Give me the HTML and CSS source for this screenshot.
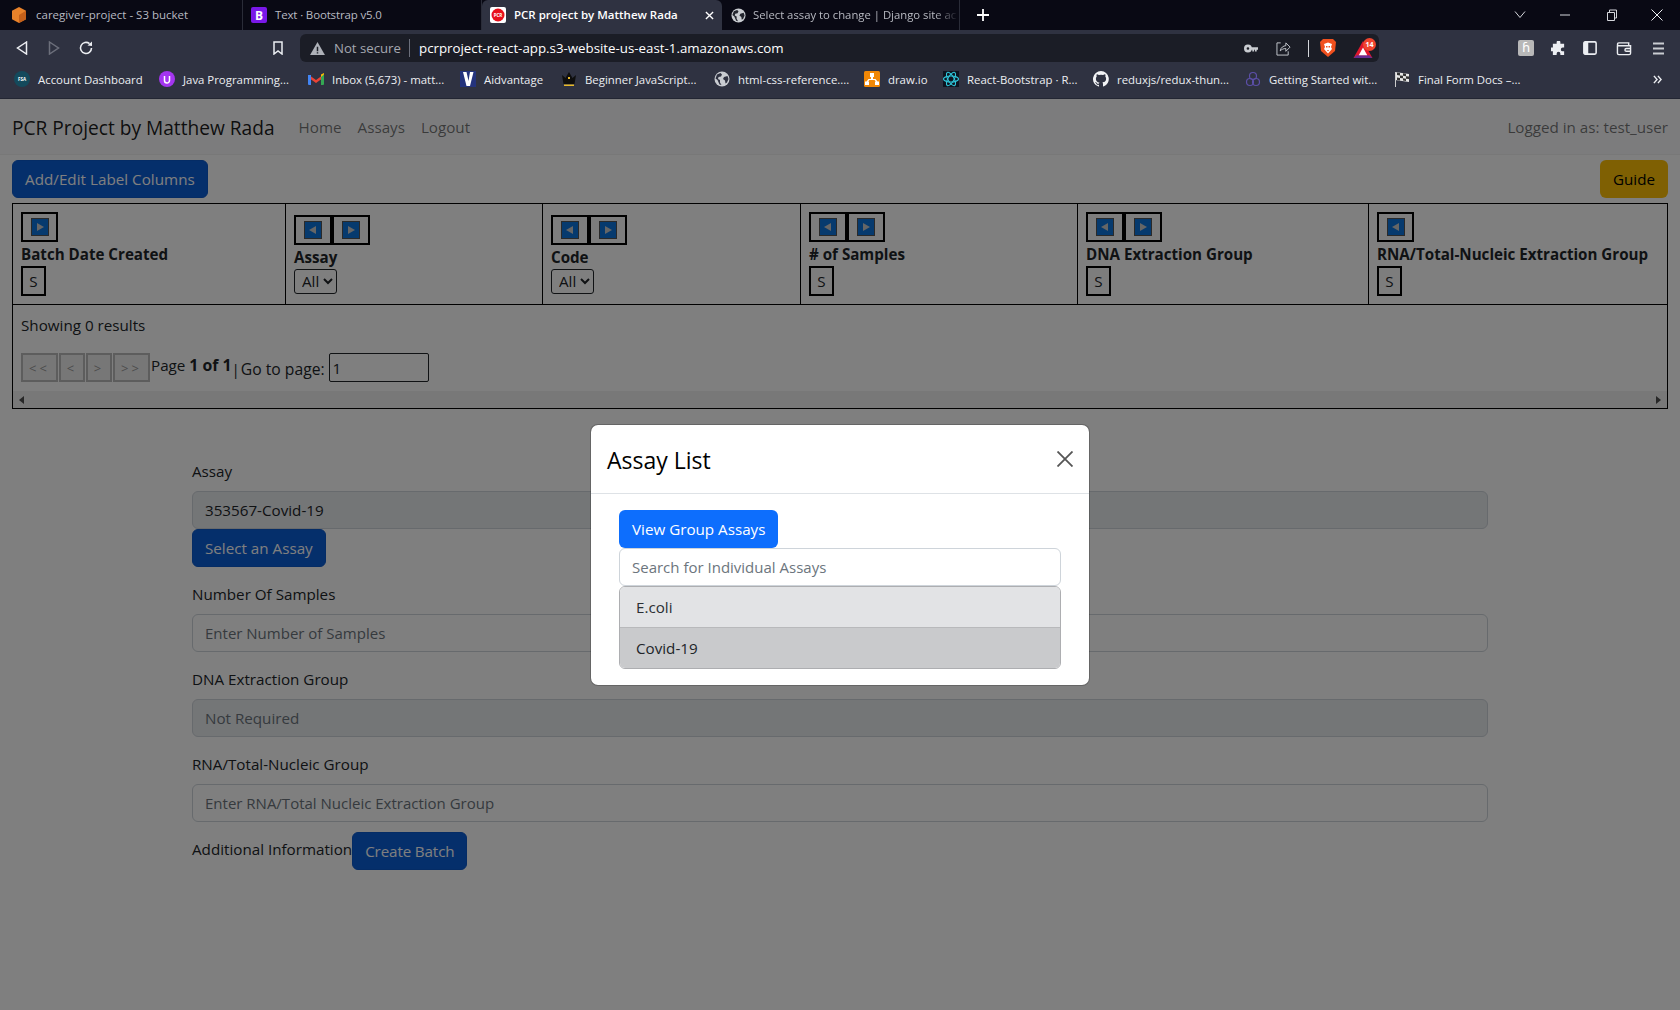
FILE: index.html
```html
<!DOCTYPE html>
<html lang="en">
<head>
<meta charset="utf-8">
<title>PCR project by Matthew Rada</title>
<link rel="stylesheet" href="styles.css">
</head>
<body>
<div class="browser">
  <header class="chrome">
    <div class="tabstrip">
      <div class="tabs">
        <div class="tab sep"><svg class="fav" viewBox="0 0 16 16"><path fill="#e8822a" d="M8 0l7 3.8v8.4L8 16l-7-3.8V3.8z"/><path fill="#c4601a" d="M8 8l7-4.200v8.400L8 16z"/></svg><span class="tabtext">caregiver-project - S3 bucket</span></div>
        <div class="tab sep"><svg class="fav" viewBox="0 0 16 16"><rect width="16" height="16" rx="2" fill="#7a18e8"/><text x="8" y="12.500" class="favb">B</text></svg><span class="tabtext tight">Text · Bootstrap v5.0</span></div>
        <div class="tab active"><svg class="fav" viewBox="0 0 16 16"><rect width="16" height="16" rx="2" fill="#fff"/><circle cx="8" cy="8" r="6.500" fill="#e8101c"/><text x="8" y="9.500" class="favp">PCR</text></svg><span class="tabtext">PCR project by Matthew Rada</span><svg class="tabclose" viewBox="0 0 10 10"><path d="M1 1l8 8M9 1l-8 8"/></svg></div>
        <div class="tab sep"><svg class="fav" viewBox="0 0 16 16"><circle cx="8" cy="8" r="7.500" fill="#c9ccd1"/><path fill="#23252e" d="M3 3.500l3.500-1.500 1.500 1.500-1 2-2.500.5-.5 2 2 1v2.500l1.500 2.500-2-.5L3.500 9 1.500 7.500zM10 6l3.500-1 1 3-1.500 3.500-1.500 1-.5-3-2-1.500z"/></svg><span class="tabtext fade">Select assay to change | Django site ac</span></div>
      </div>
      <svg class="newtab" viewBox="0 0 12 12"><path d="M6 0v12M0 6h12"/></svg>
      <div class="winctrls">
        <svg class="wc wc-chev" viewBox="0 0 12 12"><path d="M1 3.500l5 6 5-6"/></svg>
        <svg class="wc wc-min" viewBox="0 0 12 12"><path d="M1 6h10"/></svg>
        <svg class="wc wc-res" viewBox="0 0 12 12"><path d="M1.500 3.500h7v8h-7zM3.500 3.500V1h7v8H8.500"/></svg>
        <svg class="wc wc-close" viewBox="0 0 12 12"><path d="M.5.500l11 11M11.500.500l-11 11"/></svg>
      </div>
    </div>
    <div class="toolbar">
      <div class="navbtns">
        <svg class="tb back" viewBox="0 0 12 14"><path d="M10.500 1L1.500 7l9 6z"/></svg>
        <svg class="tb fwd" viewBox="0 0 12 14"><path d="M1.500 1l9 6-9 6z"/></svg>
        <svg class="tb reload" viewBox="0 0 16 16"><path d="M13.500 8a5.500 5.500 0 1 1-2-4.300"/><path class="fillw" d="M9.500 5.500L14 1.500v4.500z"/></svg>
        <svg class="tb bookmark" viewBox="0 0 10 14"><path d="M1 1h8v12L5 10l-4 3z"/></svg>
      </div>
      <div class="omnibox">
        <svg class="warn" viewBox="0 0 16 14"><path fill="#aeb1b8" d="M8 0l8 14H0z"/><path fill="#1b1d26" d="M7.200 5h1.600v5H7.200zM7.200 11h1.600v1.500H7.200z"/></svg>
        <span class="insecure">Not secure</span>
        <span class="url">pcrproject-react-app.s3-website-us-east-1.amazonaws.com</span>
        <svg class="omn key" viewBox="0 0 16 10"><circle cx="4.500" cy="5" r="3" fill="none" stroke="#c9ccd1" stroke-width="3"/><path fill="#c9ccd1" d="M8 3.500h8v3h-1.500v2h-2v-2h-1v2H9.500v-2H8z"/></svg>
        <svg class="omn share" viewBox="0 0 16 16"><path d="M5 2H1v13h12v-4"/><path d="M4.500 10.500C5 7 8 5 10.500 5V2L15 6.500 10.500 11V8C8 8 6 9 4.500 10.500z"/></svg>
        <span class="omnsep"></span>
        <svg class="lion" viewBox="0 0 16 18"><path fill="#f0501e" d="M3 0h10l3 3-1 9-7 6-7-6-1-9z"/><path fill="#fff" d="M4 5l4-1.500L12 5l-1 3 1 2-4 4.500L4 10l1-2z"/><path fill="#f0501e" d="M6 7h1.500v1.500H6zM8.500 7H10v1.500H8.500zM7 11h2l-1 1.500z"/></svg>
        <span class="bat"><svg class="battri" viewBox="0 0 20 18"><path fill="#e0172c" d="M10 0l10 18H0z"/><path fill="#662d91" d="M3.500 15L0 18h20l-3.500-3z"/><path fill="#fff" d="M10 7l4.500 8h-9z"/></svg><span class="badge">14</span></span>
      </div>
      <div class="extbtns">
        <span class="hat">ɦ</span>
        <svg class="ext puzzle" viewBox="0 0 16 16"><path fill="#eceef2" d="M6 1.500a2 2 0 0 1 4 0V3h4v4h-1.500a2 2 0 0 0 0 4H14v4h-4v-1.500a2 2 0 0 0-4 0V15H2v-4H.5a2 2 0 0 1 0-4H2V3h4z"/></svg>
        <svg class="ext sidebar" viewBox="0 0 16 16"><rect x="1" y="1" width="14" height="14" rx="1.500" fill="none" stroke="#eceef2" stroke-width="1.800"/><rect x="1" y="1" width="5" height="14" fill="#eceef2"/></svg>
        <svg class="ext wallet" viewBox="0 0 16 16"><path fill="none" stroke="#eceef2" stroke-width="1.500" d="M1 4.500V13a1.500 1.500 0 0 0 1.500 1.500h11A1.500 1.500 0 0 0 15 13V5H2.500A1.500 1.500 0 0 1 2.500 2H13v3M15 8h-4.500a1.500 1.500 0 0 0 0 3H15"/></svg>
        <svg class="menu" viewBox="0 0 11 13"><path d="M0 1.500h11M0 6.500h11M0 11.500h11"/></svg>
      </div>
    </div>
    <div class="bookmarks">
      <div class="bm"><svg class="bmi" viewBox="0 0 16 16"><circle cx="8" cy="8" r="8" fill="#144a5c"/><text x="8" y="10" class="favp">FSA</text></svg><span>Account Dashboard</span></div>
      <div class="bm"><svg class="bmi" viewBox="0 0 16 16"><circle cx="8" cy="8" r="8" fill="#a435f0"/><path fill="none" stroke="#fff" stroke-width="1.500" d="M5.500 5v4.500a2.500 2.500 0 0 0 5 0V5"/></svg><span>Java Programming...</span></div>
      <div class="bm"><svg class="bmi" viewBox="0 0 16 14"><path fill="#ea4335" d="M1 3l7 5 7-5v3L8 11 1 6z"/><path fill="#4285f4" d="M0 3h3v10H1a1 1 0 0 1-1-1z"/><path fill="#34a853" d="M13 3h3v9a1 1 0 0 1-1 1h-2z"/><path fill="#fbbc04" d="M13 5l3-2.500V1l-3 1.500z"/></svg><span>Inbox (5,673) - matt...</span></div>
      <div class="bm"><svg class="bmi" viewBox="0 0 16 16"><rect width="16" height="16" fill="#24337c"/><path fill="#fff" d="M3 1h3.500L8.500 10 10 1h3.500L10 15H6.500z"/></svg><span>Aidvantage</span></div>
      <div class="bm"><svg class="bmi" viewBox="0 0 16 16"><path fill="#0e0e0e" d="M1 4l3.500 3L8 1l3.500 6L15 4l-1.500 9h-11z"/><path fill="#e8b92a" d="M3 13.500h10V15H3zM7 6h2v2H7z"/></svg><span>Beginner JavaScript...</span></div>
      <div class="bm"><svg class="bmi" viewBox="0 0 16 16"><circle cx="8" cy="8" r="7.500" fill="#c9ccd1"/><path fill="#2f3241" d="M3 3.500l3.500-1.500 1.500 1.500-1 2-2.500.5-.5 2 2 1v2.500l1.500 2.500-2-.5L3.500 9 1.500 7.500zM10 6l3.500-1 1 3-1.500 3.500-1.500 1-.5-3-2-1.500z"/></svg><span>html-css-reference....</span></div>
      <div class="bm"><svg class="bmi" viewBox="0 0 16 16"><rect width="16" height="16" rx="1.500" fill="#f08705"/><path fill="#fff" d="M6 2h4v4H9v2h2.500l2 2.500H15V14h-4v-3.500h1L10.500 9h-5L4 10.500h1V14H1v-3.500h1.500l2-2.500H7V6H6z"/></svg><span>draw.io</span></div>
      <div class="bm"><svg class="bmi" viewBox="0 0 16 16"><rect width="16" height="16" fill="#0e1420"/><g fill="none" stroke="#2fc4d8" stroke-width="1.100"><ellipse cx="8" cy="8" rx="7.500" ry="3"/><ellipse cx="8" cy="8" rx="7.500" ry="3" transform="rotate(60 8 8)"/><ellipse cx="8" cy="8" rx="7.500" ry="3" transform="rotate(120 8 8)"/></g></svg><span>React-Bootstrap · R...</span></div>
      <div class="bm"><svg class="bmi" viewBox="0 0 16 16"><path fill="#f2f3f5" d="M8 0a8 8 0 0 0-2.500 15.600c.4.100.5-.2.500-.4v-1.400c-2.200.5-2.700-1-2.700-1-.4-.9-.9-1.200-.9-1.200-.7-.5.100-.5.100-.5.800.1 1.200.8 1.200.8.700 1.200 1.900.9 2.300.7.100-.5.300-.9.500-1.100-1.800-.2-3.600-.9-3.600-4 0-.9.300-1.600.8-2.100-.1-.2-.4-1 .1-2.100 0 0 .7-.2 2.200.8a7.500 7.500 0 0 1 4 0c1.500-1 2.200-.8 2.200-.8.500 1.100.2 1.900.1 2.100.5.600.8 1.300.8 2.100 0 3.100-1.900 3.700-3.700 3.900.3.300.6.800.6 1.500v2.200c0 .2.100.5.600.4A8 8 0 0 0 8 0z"/></svg><span>reduxjs/redux-thun...</span></div>
      <div class="bm"><svg class="bmi" viewBox="0 0 16 16"><g fill="none" stroke="#5c4fa8" stroke-width="1.200"><circle cx="8" cy="5" r="3.500"/><circle cx="5" cy="11" r="3.500"/><circle cx="11" cy="11" r="3.500"/></g></svg><span>Getting Started wit...</span></div>
      <div class="bm"><svg class="bmi" viewBox="0 0 16 16"><path fill="#e6e6e6" d="M1 1l14 2v8L1 9z"/><path fill="#333" d="M3 1.500l3 .4v2.500l-3-.4zM9 2.300l3 .4v2.500l-3-.4zM6 4.400l3 .4v2.500l-3-.4zM12 5.200l3 .4v2.500l-3-.4zM3 6.500l3 .4v2.500l-3-.4zM9 7.300l3 .4V10l-3-.4z"/><path stroke="#ccc" d="M1.500 1v15"/></svg><span>Final Form Docs –...</span></div>
      <svg class="more" viewBox="0 0 10 10"><path d="M1 1l3.500 4L1 9M5.500 1L9 5 5.500 9"/></svg>
    </div>
  </header>

  <div class="viewport">
    <nav class="navbar">
      <a class="brand">PCR Project by Matthew Rada</a>
      <a class="navlink">Home</a>
      <a class="navlink">Assays</a>
      <a class="navlink">Logout</a>
      <span class="logged">Logged in as: test_user</span>
    </nav>
    <div class="actions">
      <button class="btn primary addedit">Add/Edit Label Columns</button>
      <button class="btn warning">Guide</button>
    </div>
    <div class="tablewrap">
      <table class="grid">
        <thead>
          <tr>
            <th class="c1"><div class="moves"><button class="mv"><i class="arrow r"></i></button></div><div class="lab">Batch Date Created</div><button class="sbtn">S</button></th>
            <th class="c2"><div class="moves"><button class="mv"><i class="arrow l"></i></button><button class="mv"><i class="arrow r"></i></button></div><div class="lab">Assay</div><select class="sel"><option>All</option></select></th>
            <th class="c3"><div class="moves"><button class="mv"><i class="arrow l"></i></button><button class="mv"><i class="arrow r"></i></button></div><div class="lab">Code</div><select class="sel"><option>All</option></select></th>
            <th class="c4"><div class="moves"><button class="mv"><i class="arrow l"></i></button><button class="mv"><i class="arrow r"></i></button></div><div class="lab"># of Samples</div><button class="sbtn">S</button></th>
            <th class="c5"><div class="moves"><button class="mv"><i class="arrow l"></i></button><button class="mv"><i class="arrow r"></i></button></div><div class="lab">DNA Extraction Group</div><button class="sbtn">S</button></th>
            <th class="c6"><div class="moves"><button class="mv"><i class="arrow l"></i></button></div><div class="lab">RNA/Total-Nucleic Extraction Group</div><button class="sbtn">S</button></th>
          </tr>
        </thead>
      </table>
      <div class="results">Showing 0 results</div>
      <div class="pager">
        <button class="pg pg-wide" disabled>&lt;&lt;</button><button class="pg" disabled>&lt;</button><button class="pg" disabled>&gt;</button><button class="pg pg-wide" disabled>&gt;&gt;</button>
        <span class="pageof">Page <strong>1 of 1</strong></span>
        <span class="bar">|</span>
        <span class="goto">Go to page:</span>
        <input class="gotoinput" type="text" value="1">
      </div>
      <div class="hscroll"><i class="sc sc-l"></i><i class="sc sc-r"></i></div>
    </div>

    <form class="batchform">
      <div class="group">
        <label class="flabel">Assay</label>
        <input class="control" disabled value="353567-Covid-19">
        <button type="button" class="btn primary">Select an Assay</button>
      </div>
      <div class="group">
        <label class="flabel">Number Of Samples</label>
        <input class="control" placeholder="Enter Number of Samples">
      </div>
      <div class="group">
        <label class="flabel">DNA Extraction Group</label>
        <input class="control" disabled placeholder="Not Required">
      </div>
      <div class="group">
        <label class="flabel">RNA/Total-Nucleic Group</label>
        <input class="control" placeholder="Enter RNA/Total Nucleic Extraction Group">
      </div>
      <div class="lastrow">
        <label class="addl">Additional Information</label>
        <button type="button" class="btn primary create">Create Batch</button>
      </div>
    </form>

    <div class="backdrop"></div>
    <div class="modal">
      <div class="mhead">
        <h4 class="mtitle">Assay List</h4>
        <svg class="mclose" viewBox="0 0 16 16"><path d="M.5.500l15 15M15.500.500l-15 15"/></svg>
      </div>
      <div class="mbody">
        <button class="btn vivid">View Group Assays</button>
        <input class="control search" placeholder="Search for Individual Assays">
        <ul class="list">
          <li class="item">E.coli</li>
          <li class="item on">Covid-19</li>
        </ul>
      </div>
    </div>
  </div>
</div>
</body>
</html>
```

FILE: styles.css
```css
* { box-sizing: border-box; }
html, body { margin: 0; height: 100%; overflow: hidden; }
body { font-family: "Open Sans", "Noto Sans", sans-serif; font-size: 15.2px; color: #212529; background: #fff; }
svg { display: block; flex: none; }
.browser { display: flex; flex-direction: column; height: 1010px; }

.chrome { background: #2f3241; color: #eceef2; flex: none; height: 99px; border-bottom: 1px solid #232633; }
.tabstrip { height: 30px; background: #090914; display: flex; align-items: center; }
.tabs { display: grid; grid-template-columns: 243px 239px 240px 238px; height: 30px; }
.tab { display: flex; align-items: center; font-size: 11.500px; color: #b8bac2; min-width: 0; white-space: nowrap; }
.tab.sep { border-right: 1px solid #2a2c38; }
.tab .fav { width: 16px; height: 16px; margin: 0 9px 0 11px; }
.tab:nth-child(2) .fav { margin-left: 8px; margin-right: 8px; width: 16px; }
.tab:nth-child(4) .fav { margin: 0 7px 0 9px; width: 15px; height: 15px; }
.tab.active { background: #2f3241; color: #fff; font-weight: 600; border-radius: 6px 6px 0 0; }
.tab.active .fav { margin: 0 8px 0 8px; }
.tabtext { flex: 1; min-width: 0; margin-top: -2px; }
.tight { letter-spacing: -.15px; }
.fade { font-size: 11.300px; -webkit-mask-image: linear-gradient(90deg, #000 88%, transparent 100%); mask-image: linear-gradient(90deg, #000 88%, transparent 100%); }
.tabclose { width: 9px; height: 9px; margin: 0 8px 0 4px; fill: none; stroke: #fff; stroke-width: 1.500; }
.favb { font: 700 12px "Open Sans", sans-serif; fill: #fff; text-anchor: middle; }
.favp { font: 700 4.500px "Open Sans", sans-serif; fill: #fff; text-anchor: middle; }
.newtab { width: 12px; height: 12px; margin-left: 17px; fill: none; stroke: #fff; stroke-width: 1.800; }
.winctrls { margin-left: auto; display: flex; align-items: center; }
.wc { width: 12px; height: 12px; fill: none; stroke: #d5d7dc; stroke-width: 1; }
.wc-chev { margin-right: 33px; margin-top: -2px; }
.wc-min { margin-right: 35px; }
.wc-res { margin-right: 33px; }
.wc-close { margin-right: 17px; stroke: #eceef2; }

.toolbar { height: 36px; display: flex; align-items: center; }
.navbtns { width: 300px; display: flex; align-items: center; flex: none; }
.tb { fill: none; stroke: #eceef2; stroke-width: 1.500; }
.back { width: 12px; height: 14px; margin-left: 16px; }
.fwd { width: 12px; height: 14px; margin-left: 20px; stroke: #6c6f7b; }
.reload { width: 16px; height: 16px; margin-left: 18px; stroke-width: 1.600; }
.fillw { fill: #eceef2; stroke: none; }
.bookmark { width: 10px; height: 14px; margin-left: 179px; }
.omnibox { width: 1079px; height: 28px; flex: none; background: #1b1d26; border-radius: 6px; display: flex; align-items: center; font-size: 13.300px; }
.warn { width: 15px; height: 13px; margin-left: 10px; }
.insecure { margin-left: 9px; color: #a5a8b0; width: 76px; border-right: 1px solid #6c6f7b; line-height: 18px; white-space: nowrap; font-size: 13.200px; }
.url { margin-left: 9px; color: #fff; white-space: nowrap; }
.omn { margin-left: auto; }
.key { width: 14px; height: 9px; margin-right: 18px; }
.share { width: 15px; height: 15px; margin-left: 0; margin-right: 17px; fill: none; stroke: #c9ccd1; stroke-width: 1; }
.omnsep { width: 1px; height: 17px; background: #d5d7dc; }
.lion { width: 16px; height: 18px; margin-left: 11px; }
.bat { width: 43px; height: 20px; position: relative; flex: none; }
.battri { position: absolute; left: 17px; top: 3px; width: 20px; height: 17px; }
.badge { position: absolute; left: 27px; top: 0; width: 13px; height: 13px; border-radius: 50%; background: #f0442e; color: #fff; font-size: 7px; font-weight: 700; line-height: 13px; text-align: center; }
.extbtns { display: flex; align-items: center; flex: 1; padding-left: 139px; }
.hat { width: 16px; height: 16px; border-radius: 2px; background: #b8b8b8; color: #fff; text-align: center; font-size: 13px; line-height: 15px; margin-right: 17px; font-family: "DejaVu Sans", sans-serif; }
.ext { width: 15px; height: 15px; }
.puzzle { margin-right: 17px; }
.sidebar { width: 14px; height: 14px; margin-right: 19px; }
.wallet { width: 16px; margin-right: 21px; }
.menu { width: 11px; height: 13px; fill: none; stroke: #c9ccd1; stroke-width: 2; }

.bookmarks { height: 32px; display: grid; grid-template-columns: 145px 149px 152px 101px 153px 150px 79px 150px 152px 149px 1fr 27px; padding-left: 14px; font-size: 11.400px; align-items: center; color: #eceef2; padding-bottom: 6px; }
.bm { display: flex; align-items: center; gap: 8px; white-space: nowrap; }
.bmi { width: 16px; height: 16px; }
.more { width: 9px; height: 9px; fill: none; stroke: #eceef2; stroke-width: 1.600; }

.viewport { flex: 1; position: relative; overflow: hidden; background: #fff; }
.navbar { height: 56px; background: #f8f9fa; border-bottom: 1px solid #f1f1f1; display: flex; align-items: center; padding: 1px 12px 0; }
.brand { font-size: 19.150px; color: rgba(0,0,0,.9); margin: 1px 24px 0 0; }
.navlink { color: rgba(0,0,0,.55); margin-right: 16px; }
.logged { margin-left: auto; color: rgba(0,0,0,.55); }

.actions { display: flex; justify-content: space-between; padding: 5px 12px 0; }
.btn { height: 38px; padding: 2px 12px 0; border: 1px solid transparent; border-radius: 6px; font: inherit; line-height: 1; }
.primary { background: #0b5ed7; color: #fff; border-color: #0a58ca; }
.warning { background: #ffc107; color: #000; }
.vivid { background: #0d6efd; color: #fff; display: block; }
.addedit { letter-spacing: .03px; }
.create { letter-spacing: -.13px; }

.tablewrap { margin: 5px 12px 0; height: 206px; border: 1px solid #000; }
.grid { border-collapse: separate; border-spacing: 0; table-layout: fixed; width: 100%; }
.grid th { height: 101px; padding: 8px; border-right: 1px solid #000; border-bottom: 1px solid #000; text-align: left; vertical-align: middle; font-weight: 400; }
.grid th:last-child { border-right: 0; }
.c1 { width: 273px; } .c2 { width: 257px; } .c3 { width: 258px; } .c4 { width: 277px; } .c5 { width: 291px; }
.moves { display: flex; }
.mv { width: 38px; height: 30px; padding: 0; border: 2px solid #000; background: #fafafa; display: flex; align-items: center; justify-content: center; }
.c1 .mv, .c6 .mv { width: 37px; }
.arrow { display: block; width: 18px; height: 18px; background: #0c74dc; border: 1px solid #555; position: relative; }
.arrow::after { content: ""; position: absolute; top: 4px; border: 4px solid transparent; }
.arrow.r::after { left: 5px; border-left: 7px solid #ccc; border-right: 0; }
.arrow.l::after { left: 4px; border-right: 7px solid #ccc; border-left: 0; }
.lab { font-weight: 700; line-height: 24px; font-size: 15.150px; white-space: nowrap; }
.sbtn { width: 25px; height: 30px; padding: 0; border: 2px solid #000; background: #fafafa; font: inherit; display: block; color: #212529; }
.sel { width: 43px; height: 25px; font: inherit; display: block; padding: 0 0 0 3px; border: 1px solid #212529; border-radius: 3px; background: #fff; color: #212529; }

.results { padding: 8px 8px 0; line-height: 24px; }
.pager { display: flex; align-items: flex-end; margin: 16px 8px 0; height: 29px; }
.pg { width: 26px; height: 29px; padding: 0; margin-right: 1px; border: 2px solid #bbb; background: #efefef; color: #999; font: inherit; font-size: 13px; letter-spacing: 3px; }
.pg-wide { width: 37px; }
.pageof { align-self: center; margin-top: -6px; white-space: pre; }
.pageof strong { font-weight: 700; font-size: 15.800px; }
.bar { align-self: center; margin: 2px 0 0 0; }
.goto { align-self: center; margin: 2px 0 0 1px; font-size: 15.700px; white-space: nowrap; }
.gotoinput { width: 100px; height: 29px; margin-left: 4px; padding: 0 3px; border: 1px solid #212529; border-radius: 2px; font: inherit; color: #212529; background: #fff; }
.hscroll { height: 17px; margin-top: 9px; background: #f1f1f1; display: flex; align-items: center; justify-content: space-between; padding: 0 6px; }
.sc { display: block; border: 4px solid transparent; }
.sc-l { border-right: 5px solid #505050; border-left: 0; }
.sc-r { border-left: 5px solid #505050; border-right: 0; }

.batchform { margin: 50px 192px 0; }
.group { margin-bottom: 15px; }
.flabel { display: block; line-height: 25px; margin-bottom: 7px; height: 25px; }
.control { display: block; width: 100%; height: 38px; padding: 0 12px; border: 1px solid #ced4da; border-radius: 6px; font: inherit; font-size: 15px; color: #212529; background: #fff; }
.control::placeholder { color: #6c757d; opacity: 1; }
.control:disabled { background: #e9ecef; font-size: 15.200px; }
.lastrow { display: flex; align-items: flex-start; margin-top: -5px; }
.addl { line-height: 24px; margin-top: 5px; }

.backdrop { position: absolute; inset: 0; background: rgba(0,0,0,.5); }
.modal { position: absolute; left: 590px; top: 325px; width: 500px; height: 262px; background: #fff; border: 1px solid rgba(0,0,0,.2); border-radius: 8px; background-clip: padding-box; }
.mhead { height: 69px; border-bottom: 1px solid #dee2e6; display: flex; align-items: center; justify-content: space-between; padding: 2px 16px 0; }
.mtitle { margin: 0; font-size: 23px; font-weight: 400; color: #000; line-height: 1.5; }
.mclose { width: 16px; height: 16px; fill: none; stroke: #555; stroke-width: 1.800; margin-top: -3px; }
.mbody { padding: 16px 28px; }
.search { border-radius: 6px; }
.list { list-style: none; margin: 0; padding: 0; border: 1px solid #adaeb1; border-radius: 6px; overflow: hidden; }
.item { height: 41px; line-height: 41px; padding: 0 16px; background: #e2e3e5; border-bottom: 1px solid #b8b9bb; color: #2b2f33; }
.item:last-child { border-bottom: 0; height: 40px; }
.item.on { background: #c9cacc; color: #212529; }
```
